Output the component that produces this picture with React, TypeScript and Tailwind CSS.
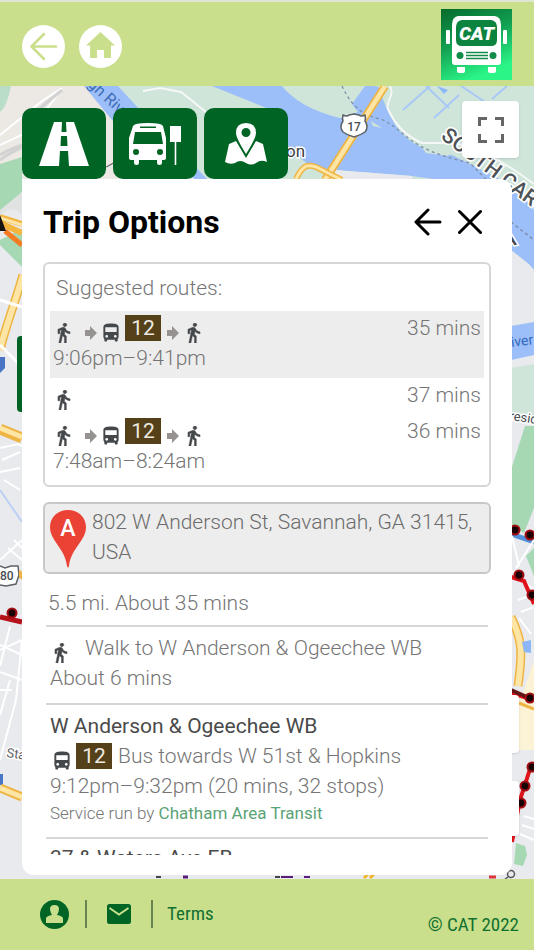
import React from "react";

const WALK_PATH =
  "M13.5 5.5c1.1 0 2-.9 2-2s-.9-2-2-2-2 .9-2 2 .9 2 2 2zM9.8 8.9L7 23h2.1l1.8-8 2.1 2v6h2v-7.5l-2.1-2 .6-3C14.8 12 16.8 13 19 13v-2c-1.9 0-3.5-1-4.3-2.4l-1-1.6c-.4-.6-1-1-1.7-1-.3 0-.5.1-.8.1L6 8.3V13h2V9.6l1.8-.7";
const BUS_PATH =
  "M4 16c0 .88.39 1.67 1 2.22V20c0 .55.45 1 1 1h1c.55 0 1-.45 1-1v-1h8v1c0 .55.45 1 1 1h1c.55 0 1-.45 1-1v-1.78c.61-.55 1-1.34 1-2.22V6c0-3.5-3.58-4-8-4s-8 .5-8 4v10zm3.5 1c-.83 0-1.5-.67-1.5-1.5S6.67 14 7.5 14s1.5.67 1.5 1.5S8.33 17 7.5 17zm9 0c-.83 0-1.5-.67-1.5-1.5s.67-1.5 1.5-1.5 1.5.67 1.5 1.5-.67 1.5-1.5 1.5zm1.500-6H6V6h12v5z";

function WalkIcon() {
  return (
    <svg
      className="h-5 w-3.5 shrink-0"
      viewBox="5.5 1.5 14 21.5"
      fill="#45484b"
      stroke="#45484b"
      strokeWidth="0.5"
      aria-hidden="true"
    >
      <path d={WALK_PATH} />
    </svg>
  );
}

function BusIcon() {
  return (
    <svg className="h-5 w-4 shrink-0" viewBox="4 1.5 16 21" fill="#45484b" aria-hidden="true">
      <path d={BUS_PATH} />
    </svg>
  );
}

function ThenArrow() {
  return (
    <svg className="h-5 w-3 shrink-0" viewBox="0 0 12 20" fill="#959291" aria-hidden="true">
      <path d="M0 7h5V3l7 7-7 7v-4H0z" />
    </svg>
  );
}

function LineBadge() {
  return (
    <span className="h-[26px] w-9 shrink-0 self-center bg-[#54411a] text-center leading-[26px] font-normal text-[#eeeae2]">
      12
    </span>
  );
}

function TransitLegs() {
  return (
    <span className="flex h-[30px] items-end gap-1.5 pl-1">
      <WalkIcon />
      <span className="ml-2 flex">
        <ThenArrow />
      </span>
      <BusIcon />
      <LineBadge />
      <ThenArrow />
      <span className="ml-0.5 flex">
        <WalkIcon />
      </span>
    </span>
  );
}

function Stop({ x, y }: { x: number; y: number }) {
  return (
    <g>
      <circle cx={x} cy={y} r="5.5" fill="#a00d12" />
      <circle cx={x} cy={y} r="3.4" fill="#180204" />
    </g>
  );
}

function MapCanvas() {
  return (
    <svg
      className="absolute inset-0 h-full w-full"
      viewBox="0 86 534 793"
      preserveAspectRatio="xMidYMid slice"
      fontFamily="Roboto, sans-serif"
      aria-hidden="true"
    >
      <rect y="86" width="534" height="793" fill="#e8eaed" />
      {/* land along the river */}
      <path d="M0 86H95L130 140V190H0Z" fill="#ece8e4" />
      <path d="M0 86H11C8 100 5 108 0 112Z" fill="#b9ddc6" />
      <path d="M0 164L22 157V192C14 200 6 208 0 214Z" fill="#a6d8b4" />
      <path d="M118 86H534V190H205Z" fill="#cfe5da" />
      <path d="M0 135L42 101L62 88M0 145L30 131 62 89" stroke="#fff" strokeWidth="2" fill="none" />
      <path d="M0 155C8 150 18 146 30 143M0 160C10 152 20 150 34 138M38 110L62 90" stroke="#d3d2d3" strokeWidth="3" fill="none" />
      <path d="M84 86H118L140 110L208 180H196L112 120Z" fill="#9cbef9" />
      <path d="M143 91L160 88L181 92L206 112" stroke="#f6f8f7" strokeWidth="2" fill="none" />
      {/* main channel */}
      <path
        d="M212 86H282C295 101 312 111 342 118L365 86H378C385 103 390 128 418 142C446 155 465 156 486 164L534 208V270L506 236L440 180L412 176L332 170L286 160V116Z"
        fill="#9cbef9"
      />
      <path d="M282 86H343C347 96 352 105 358 112L340 118C312 111 294 100 282 86Z" fill="#cfe5da" />
      <path d="M372 86C392 86 384 102 392 119C403 140 420 151 452 155L534 196V86Z" fill="#cfe5da" />
      <path d="M390 86C395 96 385 102 388 109C397 129 410 138 422 143H455C470 148 488 150 534 184" stroke="#f4f7f5" strokeWidth="2" fill="none" />
      <path d="M420 145L456 146L448 156L426 153ZM371 121L382 128L373 126Z" fill="#cfe5da" />
      <path d="M403 110L430 86M426 86L449 108M434 118L459 95M461 86L485 102M492 99L507 86" stroke="#a8c8f6" strokeWidth="2" fill="none" />
      <path d="M437 86L448 90L444 94Z" fill="#8db7f8" />
      <path d="M286 158H300L330 180H286Z" fill="#cfe5da" />
      <path d="M336 170L412 176V180H330Z" fill="#e8eaed" />
      <path d="M342 86C352 108 365 116 381 119C410 133 404 148 470 163L510 204L534 240" stroke="#7d8fa6" strokeWidth="1.3" strokeDasharray="3 3" fill="none" />
      <path d="M385 86L325 180" stroke="#efb544" strokeWidth="8" />
      <path d="M385 86L325 180" stroke="#fce5a5" strokeWidth="4.5" />
      <path d="M296 179C303 165 307 164 316 167L342 180" stroke="#efb544" strokeWidth="6" fill="none" />
      <path d="M296 179C303 165 307 164 316 167L342 180" stroke="#fce5a5" strokeWidth="3" fill="none" />
      <path d="M343 115q4 2 6 0l5-1 5 1q2 2 6 0q1 4 0 6q4 6 0 11q-4 3-11 5q-7-2-11-5q-4-5 0-11q-1-2 0-6z" fill="#fff" stroke="#5e6266" strokeWidth="1.500" />
      <text x="354" y="131" fontSize="12" fontWeight="500" fill="#4a4e52" textAnchor="middle">17</text>
      <text x="286" y="157" fontSize="17" fill="#3c4043" stroke="#fff" strokeWidth="3" paintOrder="stroke">on</text>
      <text x="87" y="85" fontSize="16" fill="#3d6db5" transform="rotate(43 87 85)">gh River</text>
      <text x="106" y="166" fontSize="15" fill="#5f6368" transform="rotate(40 106 166)">/ E</text>
      <text x="440" y="138" fontSize="21" fontWeight="500" fill="#4d5256" stroke="#fff" strokeWidth="3" paintOrder="stroke" transform="rotate(37 440 138)">
        SOUTH CAROLINA
      </text>

      {/* right edge */}
      <path d="M511 193L534 207V268L511 250Z" fill="#9cbef9" />
      <path d="M511 222L534 240" stroke="#76869b" strokeWidth="1.3" strokeDasharray="3 3" />
      <text x="440" y="138" fontSize="21" fontWeight="500" fill="#4d5256" stroke="#fff" strokeWidth="3" paintOrder="stroke" transform="rotate(37 440 138)">
        SOUTH CAROLINA
      </text>
      <text x="504" y="247" fontSize="20" fontWeight="500" fill="#45494d" stroke="#fff" strokeWidth="3" paintOrder="stroke" transform="rotate(-10 504 247)">A</text>
      <path d="M511 326L534 322V355L511 360Z" fill="#9cbef9" />
      <text x="503" y="348" fontSize="14" fill="#3469bb" transform="rotate(-7 503 348)">River</text>
      <path d="M511 368L534 364V420L511 415Z" fill="#cfe5da" />
      <path d="M525 426H534V508L524 533L511 525V470Z" fill="#a6d8b4" />
      <text x="509" y="420" fontSize="13" fill="#45494d" stroke="#fff" strokeWidth="3" paintOrder="stroke" transform="rotate(8 509 420)">resid</text>
      <path d="M511 534L534 542" stroke="#5290d9" strokeWidth="5" />
      <path d="M512 536L519 566M534 540L516 568M518 600L534 594M521 612L534 607M519 618L531 634M511 570L534 590" stroke="#fff" strokeWidth="2" />
      <path d="M526 556L534 548V576Z" fill="#a6d8b4" />
      <path d="M534 660C524 690 520 705 511 710V750H534Z" fill="#fcf2d5" />
      <path d="M511 617C522 640 523 650 518 686" stroke="#efb544" strokeWidth="9" fill="none" />
      <path d="M511 617C522 640 523 650 518 686" stroke="#fce5a5" strokeWidth="6" fill="none" />
      <path d="M522 642L531 640V653L524 652Z" fill="#8db7f8" />
      <path d="M511 577L524 581L534 604M511 693L534 700M531 766L520 800L512 842" stroke="#e0141c" strokeWidth="4" fill="none" />
      <path d="M511 690L527 697L534 698" stroke="#641516" strokeWidth="4" fill="none" />
      <path d="M519 703L534 709" stroke="#efb544" strokeWidth="3" />
      <Stop x={515} y={530} />
      <Stop x={530} y={535} />
      <Stop x={519} y={575} />
      <Stop x={532} y={595} />
      <Stop x={530} y={698} />
      <Stop x={532} y={767} />
      <Stop x={525} y={786} />
      <Stop x={521} y={803} />
      <path d="M516 843L525 846L527 855L523 866L514 864Z" fill="#a6d8b4" />
      <path d="M524 816L534 819M522 825L534 829M520 834L534 840" stroke="#fff" strokeWidth="2" />

      {/* left edge */}
      <path d="M0 210L22 192V215C14 205 6 210 0 215Z" fill="#dfe2e0" />
      <path d="M0 240L22 229V267L0 245Z" fill="#a6d8b4" />
      <path d="M0 217L22 224M0 223L22 233" stroke="#f4b53f" strokeWidth="6" />
      <path d="M0 218L22 225" stroke="#fce5a5" strokeWidth="3" />
      <path d="M5 231L22 245" stroke="#f57c23" strokeWidth="5" />
      <path d="M0 215L6 231H0Z" fill="#17130f" />
      <path d="M23 275C16 300 6 325 0 350" stroke="#efb544" strokeWidth="9" fill="none" />
      <path d="M23 275C16 300 6 325 0 350" stroke="#fce5a5" strokeWidth="6" fill="none" />
      <path d="M0 300L22 307M0 345L18 363" stroke="#fff" strokeWidth="3" />
      <path d="M0 357H5V368L0 373Z" fill="#4a74c4" />
      <path d="M0 429L22 438" stroke="#efb544" strokeWidth="11" />
      <path d="M0 428L22 437" stroke="#fce5a5" strokeWidth="5" />
      <path d="M0 448L18 444 22 446M2 460L20 452M0 472L20 468M4 480L20 490M0 560L22 540M8 548L22 560M14 540L22 548" stroke="#fff" strokeWidth="2" fill="none" />
      <path d="M0 490L22 522" stroke="#bcd0f4" strokeWidth="2" />
      <path d="M-6 566h6l5 2 6-2h7l1 9-3 9-10 2-12-2z" fill="#fff" stroke="#5e6266" strokeWidth="1.500" />
      <text x="0" y="580" fontSize="12" fontWeight="500" fill="#4a4e52">80</text>
      <path d="M19 570L23 572V580L19 578Z" fill="#efb544" />
      <path d="M0 617L22 622" stroke="#b5121b" strokeWidth="5" />
      <Stop x={12} y={613} />
      <path d="M10 626L0 666M0 645L22 655M0 672L22 680M10 680L0 715M0 690H12M22 640L16 700L0 760M0 650L22 640" stroke="#fff" strokeWidth="2" fill="none" />
      <text x="6" y="757" fontSize="13" fill="#5f6368" stroke="#fff" strokeWidth="3" paintOrder="stroke" transform="rotate(8 6 757)">State</text>
      <path d="M0 774H3V785H0Z" fill="#4a74c4" />
      <path d="M0 788L22 797" stroke="#efb544" strokeWidth="9" />
      <path d="M0 788L22 797" stroke="#fce5a5" strokeWidth="5" />

      {/* sliver under the panel */}
      <path d="M156 877H161M275 877H280" stroke="#44464a" strokeWidth="2" />
      <path d="M183 877H188" stroke="#5b1d7c" strokeWidth="3" />
      <path d="M281 877H293M304 877H310" stroke="#5b1d7c" strokeWidth="2" />
      <path d="M364 878L368 874M370 878L374 874" stroke="#f1b32c" strokeWidth="3" />
      <path d="M489 877H496" stroke="#d9363c" strokeWidth="3" />
      <circle cx="511" cy="874" r="3.500" fill="none" stroke="#55595d" strokeWidth="1.500" />
      <path d="M508 877L505 879" stroke="#55595d" strokeWidth="1.500" />
    </svg>
  );
}

function Logo() {
  return (
    <svg className="h-[71px] w-[71px]" viewBox="0 0 71 71" role="img" aria-label="CAT">
      <defs>
        <linearGradient id="logoFill" x1="0" y1="0" x2="0.4" y2="1">
          <stop offset="0" stopColor="#066a2c" />
          <stop offset="0.5" stopColor="#12a052" />
          <stop offset="1" stopColor="#2bf587" />
        </linearGradient>
      </defs>
      <rect width="71" height="71" fill="url(#logoFill)" />
      <rect x="5" y="21" width="4" height="14" rx="1" fill="#fff" />
      <rect x="62" y="21" width="4" height="14" rx="1" fill="#fff" />
      <path d="M16 58h8v4q0 2-2 2h-4q-2 0-2-2zM47 58h8v4q0 2-2 2h-4q-2 0-2-2z" fill="#fff" />
      <path d="M17 7H54Q60 8 60 16V53Q60 56 57 56H14Q11 56 11 53V16Q11 8 17 7Z" fill="#fff" />
      <path d="M21 11H50Q56 12 56 18V31Q56 37 50 37H21Q15 37 15 31V18Q15 12 21 11Z" fill="#0d8340" />
      <circle cx="19" cy="46.500" r="3.500" fill="#118c48" />
      <circle cx="52" cy="46.500" r="3.500" fill="#118c48" />
      <path d="M25 43.500H47M25 46.500H47M25 49.500H47" stroke="#118c48" strokeWidth="1.500" />
      <text x="35.500" y="31" fontFamily="Roboto, sans-serif" fontSize="19" fontWeight="900" fontStyle="italic" textAnchor="middle" fill="#fff">
        CAT
      </text>
    </svg>
  );
}

function RoadIcon() {
  return (
    <svg className="h-11 w-[50px]" viewBox="0 0 50 44" fill="#fff" aria-hidden="true">
      <path fillRule="evenodd" d="M15 0H35L50 44H0ZM23 0L22.500 10H27.500L27 0ZM22 14L21.500 24H28.500L28 14ZM21 29L20 44H30L29 29Z" />
    </svg>
  );
}

function BusStopIcon() {
  return (
    <svg className="h-11 w-[52px]" viewBox="0 0 52 44" fill="#fff" aria-hidden="true">
      <path
        fillRule="evenodd"
        d="M4 4Q5 1 19 1Q33 1 34 4L37 16V36Q37 38 35 38H33V41Q33 43 30.500 43Q28 43 28 41V38H10V41Q10 43 7.500 43Q5 43 5 41V38H2Q0 38 0 36V16ZM11 4.500V6H27V4.500ZM6 10L4 22H34L32 10ZM7 27A3 3 0 1 0 7 33A3 3 0 1 0 7 27ZM31 27A3 3 0 1 0 31 33A3 3 0 1 0 31 27Z"
      />
      <path d="M41 4H52V20H47.300V43H45.700V20H41Z" />
    </svg>
  );
}

function MapPinIcon() {
  return (
    <svg className="h-11 w-11" viewBox="0 0 44 44" fill="#fff" aria-hidden="true">
      <path d="M5 22L12 19L22 36L32 19L39 22L43 40Q37 37 32 41Q27 44 22 41Q16 37 11 41Q6 43 1 40Z" />
      <path fillRule="evenodd" d="M22 1Q32 1 32 11Q32 16 22 32Q12 16 12 11Q12 1 22 1ZM22 6A4.500 4.500 0 1 0 22 15A4.500 4.500 0 1 0 22 6Z" />
    </svg>
  );
}

const tabs = [
  { label: "Routes", icon: <RoadIcon /> },
  { label: "Bus stops", icon: <BusStopIcon /> },
  { label: "Trip planner", icon: <MapPinIcon /> },
];

export default function App() {
  return (
    <div className="flex h-screen flex-col overflow-hidden bg-[#c9df8c] font-['Roboto',sans-serif] text-[#757575]">
      <header className="flex h-[86px] shrink-0 items-center justify-between border-t-2 border-[#dfe5d3] px-[22px]">
        <nav className="flex gap-3.5 pt-1">
          <button type="button" aria-label="Back" className="h-[43px] w-[43px] rounded-full bg-white">
            <svg viewBox="0 0 43 43" fill="none" stroke="#c9df8c" strokeWidth="2.500" strokeLinecap="round" strokeLinejoin="round">
              <path d="M34 21.500H10M22 9L9.500 21.500L22 34" />
            </svg>
          </button>
          <button type="button" aria-label="Home" className="h-[43px] w-[43px] rounded-full bg-white">
            <svg viewBox="0 0 43 43" fill="#c9df8c">
              <path d="M21.500 7L36 20.500H32V33H25V25H18V33H11V20.500H7Z" />
            </svg>
          </button>
        </nav>
        <Logo />
      </header>

      <main className="relative flex min-h-0 flex-1 flex-col px-[22px] pt-[22px] pb-1">
        <MapCanvas />
        <div className="absolute top-[250px] left-[17px] h-[76px] w-3 rounded bg-[#006425]" />
        <div className="absolute right-[15px] bottom-[126px] h-[58px] w-10 rounded bg-white shadow" />
        <div className="absolute right-[15px] bottom-[43px] h-[55px] w-10 rounded bg-white shadow" />
        <button
          type="button"
          aria-label="Toggle fullscreen"
          className="absolute top-[15px] right-[15px] z-10 flex h-[57px] w-[57px] items-center justify-center rounded-sm bg-white shadow"
        >
          <svg className="h-[26px] w-[26px]" viewBox="0 0 26 26" fill="none" stroke="#666" strokeWidth="3">
            <path d="M1.500 9V1.500H9M17 1.500H24.500V9M24.500 17V24.500H17M9 24.500H1.500V17" />
          </svg>
        </button>

        <div className="relative flex shrink-0 gap-[7px]">
          {tabs.map((t) => (
            <button
              key={t.label}
              type="button"
              aria-label={t.label}
              className="flex h-[71px] w-[84px] items-center justify-center rounded-[10px] bg-[#006425]"
            >
              {t.icon}
            </button>
          ))}
        </div>

        <section className="relative flex min-h-0 flex-1 flex-col rounded-xl rounded-tl-none bg-white px-[21px] pb-5">
          <div className="flex h-[83px] shrink-0 items-center justify-between pt-0.5 pr-[9px]">
            <h1 className="text-[32px] leading-10 font-bold text-black">Trip Options</h1>
            <div className="flex gap-4">
              <button type="button" aria-label="Previous">
                <svg className="h-7 w-7" viewBox="0 0 28 28" fill="none" stroke="#000" strokeWidth="3" strokeLinecap="round" strokeLinejoin="round">
                  <path d="M26 14H3M14 2L2 14L14 26" />
                </svg>
              </button>
              <button type="button" aria-label="Close">
                <svg className="h-7 w-6" viewBox="0 0 24 28" fill="none" stroke="#000" strokeWidth="3" strokeLinecap="round">
                  <path d="M1.500 3.500L22.500 24.500M22.500 3.500L1.500 24.500" />
                </svg>
              </button>
            </div>
          </div>

          <div className="min-h-0 flex-1 overflow-y-auto text-[21px] leading-[30px] font-light [scrollbar-width:none]">
            <div className="rounded-md border-2 border-[#d6d6d6] px-[5px] pb-1">
              <h2 className="px-1.5 pt-[9px] pb-2">Suggested routes:</h2>
              <ul>
                <li className="flex h-[67px] justify-between bg-[#ededed] px-[3px] pt-0.5">
                  <div>
                    <TransitLegs />
                    9:06pm–9:41pm
                  </div>
                  <span>35 mins</span>
                </li>
                <li className="flex h-9 justify-between px-[3px] pt-0.5">
                  <span className="flex h-[30px] items-end pl-1">
                    <WalkIcon />
                  </span>
                  <span>37 mins</span>
                </li>
                <li className="flex h-[67px] justify-between px-[3px] pt-0.5">
                  <div>
                    <TransitLegs />
                    7:48am–8:24am
                  </div>
                  <span>36 mins</span>
                </li>
              </ul>
            </div>

            <div className="mt-[15px] flex h-[72px] gap-1.5 rounded-md border-2 border-[#c8c8c8] bg-[#ededed] px-[5px] pt-[3px] text-[#6c6c6c]">
              <svg className="mt-0.5 h-[59px] w-9 shrink-0" viewBox="0 0 36 59" aria-hidden="true">
                <path d="M18 1C8 1 0 8 0 18C0 32 15 39 17 57Q18 60 19 57C21 39 36 32 36 18C36 8 28 1 18 1Z" fill="#ea4335" />
                <text x="18" y="27" fontSize="23" fontWeight="500" fill="#fff" textAnchor="middle">A</text>
              </svg>
              <p>802 W Anderson St, Savannah, GA 31415, USA</p>
            </div>

            <div className="mr-[3px] ml-[3px]">
              <p className="px-0.5 pt-[14px] pb-[7px]">5.5 mi. About 35 mins</p>
              <div className="h-[78px] border-t-2 border-[#d6d6d6] px-1 pt-1.5">
                <div className="flex items-end gap-[17px] pl-1">
                  <span className="flex h-[30px] items-end">
                    <WalkIcon />
                  </span>
                  <span>Walk to W Anderson &amp; Ogeechee WB</span>
                </div>
                <p>About 6 mins</p>
              </div>
              <div className="h-[134px] border-t-2 border-[#d6d6d6] px-1 pt-1.5">
                <h3 className="font-normal text-[#4a4a4a]">W Anderson &amp; Ogeechee WB</h3>
                <div className="flex h-[30px] items-end gap-1.5 pl-1">
                  <BusIcon />
                  <LineBadge />
                  <span>Bus towards W 51st &amp; Hopkins</span>
                </div>
                <p>9:12pm–9:32pm (20 mins, 32 stops)</p>
                <p className="text-[17px] leading-6">
                  Service run by{" "}
                  <a href="#agency" className="font-normal text-[#5ba376]">
                    Chatham Area Transit
                  </a>
                </p>
              </div>
              <div className="border-t-2 border-[#d6d6d6] px-1 pt-1">
                <h3 className="font-normal text-[#4a4a4a]">37 &amp; Waters Ave EB</h3>
              </div>
            </div>
          </div>
        </section>
      </main>

      <footer className="flex h-[71px] shrink-0 justify-between px-[15px] font-['Roboto_Condensed',Roboto,sans-serif] text-[19px] leading-7 text-[#11702f]">
        <div className="flex h-[70px] items-center pl-[25px]">
          <button type="button" aria-label="Account">
            <svg className="h-[29px] w-[29px]" viewBox="0 0 29 29" aria-hidden="true">
              <circle cx="14.500" cy="14.500" r="14.500" fill="#006425" />
              <path d="M6 23V18Q7 16 12 15Q10 12 10 9Q10 5 14.500 5Q19 5 19 9Q19 12 17 15Q22 16 23 18V23Z" fill="#c9df8c" />
            </svg>
          </button>
          <span className="ml-4 h-7 w-0.5 bg-[#6a8451]" />
          <button type="button" aria-label="Contact" className="mx-5">
            <svg className="h-5 w-6" viewBox="0 0 24 20" aria-hidden="true">
              <rect width="24" height="20" rx="2.500" fill="#006425" />
              <path d="M2.500 4L12 10.500L21.500 4" fill="none" stroke="#c9df8c" strokeWidth="2" />
            </svg>
          </button>
          <span className="h-7 w-0.5 bg-[#6a8451]" />
          <a href="#terms" className="ml-3.5">
            Terms
          </a>
        </div>
        <p className="self-end pb-[11px]">© CAT 2022</p>
      </footer>
    </div>
  );
}
